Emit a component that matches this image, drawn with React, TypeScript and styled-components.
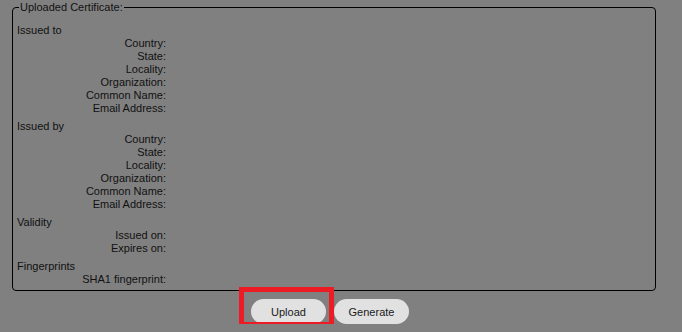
import React from 'react';
import styled, { createGlobalStyle } from 'styled-components';

const GlobalStyle = createGlobalStyle`
  html, body {
    margin: 0;
    padding: 0;
    background: #808080;
  }
  body {
    font-family: "Liberation Sans", Arial, sans-serif;
    font-size: 11px;
    color: #111;
  }
`;

const Page = styled.div`
  width: 644px;
  padding: 1px 0 0 12px;
`;

const CertBox = styled.fieldset`
  margin: 0;
  padding: 0 4px 4px 4px;
  border: 1px solid #000;
  border-radius: 4px;
  height: 290px;
  box-sizing: border-box;
`;

const Legend = styled.legend`
  margin-left: 2px;
  padding: 0 1px;
  line-height: 13px;
`;

const Section = styled.div`
  margin-top: ${(p: { $first?: boolean }) => (p.$first ? '10px' : '5px')};
`;

const SectionTitle = styled.div`
  line-height: 13px;
`;

const FieldRow = styled.div`
  display: grid;
  grid-template-columns: 149px 1fr;
  line-height: 13px;
`;

const FieldLabel = styled.span`
  text-align: right;
`;

const FieldValue = styled.span`
  padding-left: 4px;
`;

const ButtonBar = styled.div`
  display: flex;
  justify-content: center;
  align-items: flex-start;
  gap: 8px;
  padding-right: 8px;
  margin-top: 8px;
`;

const Highlight = styled.div`
  position: relative;
  display: flex;
  height: 25px;
`;

const HighlightFrame = styled.div`
  position: absolute;
  left: -12px;
  top: -12px;
  width: 95px;
  height: 40px;
  box-sizing: border-box;
  border: 5px solid #ed1c24;
  pointer-events: none;
`;

const PillButton = styled.button`
  display: block;
  width: 75px;
  height: 25px;
  border: none;
  border-radius: 13px;
  background: #e1e1e1;
  color: #1a1a1a;
  font-family: "Liberation Sans", Arial, sans-serif;
  font-size: 11px;
  padding: 0;
  cursor: pointer;
`;

type Section = { title: string; fields: string[] };

const subjectFields = ['Country:', 'State:', 'Locality:', 'Organization:', 'Common Name:', 'Email Address:'];

const sections: Section[] = [
  { title: 'Issued to', fields: subjectFields },
  { title: 'Issued by', fields: subjectFields },
  { title: 'Validity', fields: ['Issued on:', 'Expires on:'] },
  { title: 'Fingerprints', fields: ['SHA1 fingerprint:'] },
];

export default function App() {
  return (
    <Page>
      <GlobalStyle />
      <CertBox>
        <Legend>Uploaded Certificate:</Legend>
        {sections.map((s, i) => (
          <Section key={s.title} $first={i === 0}>
            <SectionTitle>{s.title}</SectionTitle>
            {s.fields.map((f) => (
              <FieldRow key={f}>
                <FieldLabel>{f}</FieldLabel>
                <FieldValue />
              </FieldRow>
            ))}
          </Section>
        ))}
      </CertBox>
      <ButtonBar>
        <Highlight>
          <PillButton>Upload</PillButton>
          <HighlightFrame />
        </Highlight>
        <PillButton>Generate</PillButton>
      </ButtonBar>
    </Page>
  );
}
